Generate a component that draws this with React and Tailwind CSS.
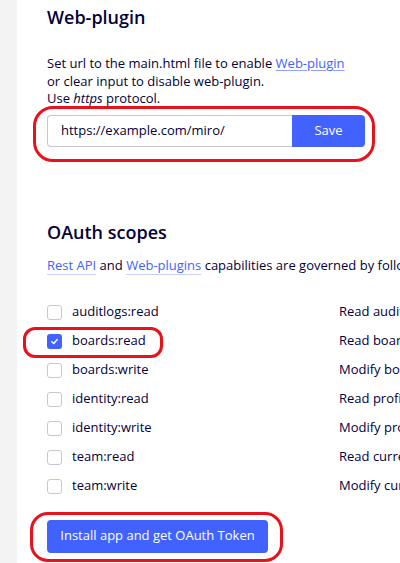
const scopes = [
  { name: 'auditlogs:read', desc: 'Read audit logs of your organization', checked: false },
  { name: 'boards:read', desc: 'Read boards you have access to', checked: true },
  { name: 'boards:write', desc: 'Modify boards you have access to', checked: false },
  { name: 'identity:read', desc: 'Read profile information for current user', checked: false },
  { name: 'identity:write', desc: 'Modify profile information for current user', checked: false },
  { name: 'team:read', desc: 'Read current team information', checked: false },
  { name: 'team:write', desc: 'Modify current team information', checked: false },
]

const Checkbox = ({ checked }) =>
  checked ? (
    <span className="flex h-[15px] w-[15px] shrink-0 items-center justify-center rounded-[3px] bg-[#4262ff]">
      <svg width="9" height="9" viewBox="0 0 10 10" fill="none">
        <path d="M2 5.2 4.2 7.3 8 2.8" stroke="white" strokeWidth="1.6" strokeLinecap="round" strokeLinejoin="round" />
      </svg>
    </span>
  ) : (
    <span className="h-[15px] w-[15px] shrink-0 rounded-[3px] border border-[#c7c7d2] bg-white" />
  )

export default function App() {
  return (
    <div className="flex h-[563px] w-[400px] overflow-hidden bg-white text-[#050038] [font-family:'Open_Sans','Noto_Sans',sans-serif]">
      <div className="w-[17px] shrink-0 bg-[#f3f3f3]" />
      <div className="relative min-w-0 flex-1 pl-[30px]">
        <h2 className="mt-[3px] text-[18px] font-semibold leading-[28px]">Web-plugin</h2>
        <p className="mt-[24px] w-[298px] text-[13px] leading-[17.5px]">
          Set url to the main.html file to enable{' '}
          <a className="text-[#4262ff] underline decoration-[#4262ff]/60 underline-offset-2">Web-plugin</a> or clear input to
          disable web-plugin.
          <br />
          Use <i>https</i> protocol.
        </p>

        <div className="relative mt-[7px] w-[318px]">
          <div className="pointer-events-none absolute -left-[14px] -top-[9px] h-[56px] w-[342px] rounded-[20px] border-[3px] border-[#e8121c]" />
          <div className="flex h-[32px]">
            <div className="flex flex-1 items-center rounded-l-[4px] border border-r-0 border-[#c7c7d2] pl-[13px] text-[13px]">
              https://example.com/miro/
            </div>
            <button className="w-[73px] rounded-r-[4px] bg-[#4262ff] text-[13px] text-white">Save</button>
          </div>
        </div>

        <h2 className="mt-[71px] text-[18px] font-semibold leading-[28px]">OAuth scopes</h2>
        <p className="mt-[10px] whitespace-nowrap text-[13px] leading-[18px]">
          <a className="text-[#4262ff] underline decoration-[#c9d0ff] underline-offset-4">Rest API</a> and{' '}
          <a className="text-[#4262ff] underline decoration-[#c9d0ff] underline-offset-4">Web-plugins</a> capabilities are governed by following scopes
        </p>

        <div className="mt-[24px] flex flex-col">
          {scopes.map((s) => (
            <div key={s.name} className="relative flex h-[29px] items-center whitespace-nowrap text-[13px]">
              {s.name === 'boards:read' && (
                <div className="pointer-events-none absolute -left-[24px] top-0 h-[31px] w-[140px] rounded-[12px] border-[3px] border-[#e8121c]" />
              )}
              <Checkbox checked={s.checked} />
              <span className="ml-[10px] w-[267px] shrink-0">{s.name}</span>
              <span className="shrink-0">{s.desc}</span>
            </div>
          ))}
        </div>

        <div className="relative mt-[19px] w-[221px]">
          <div className="pointer-events-none absolute -left-[17px] -top-[8px] h-[50px] w-[253px] rounded-[18px] border-[3px] border-[#e8121c]" />
          <button className="h-[33px] w-[221px] rounded-[4px] bg-[#4262ff] text-[13px] text-white">
            Install app and get OAuth Token
          </button>
        </div>
      </div>
    </div>
  )
}
